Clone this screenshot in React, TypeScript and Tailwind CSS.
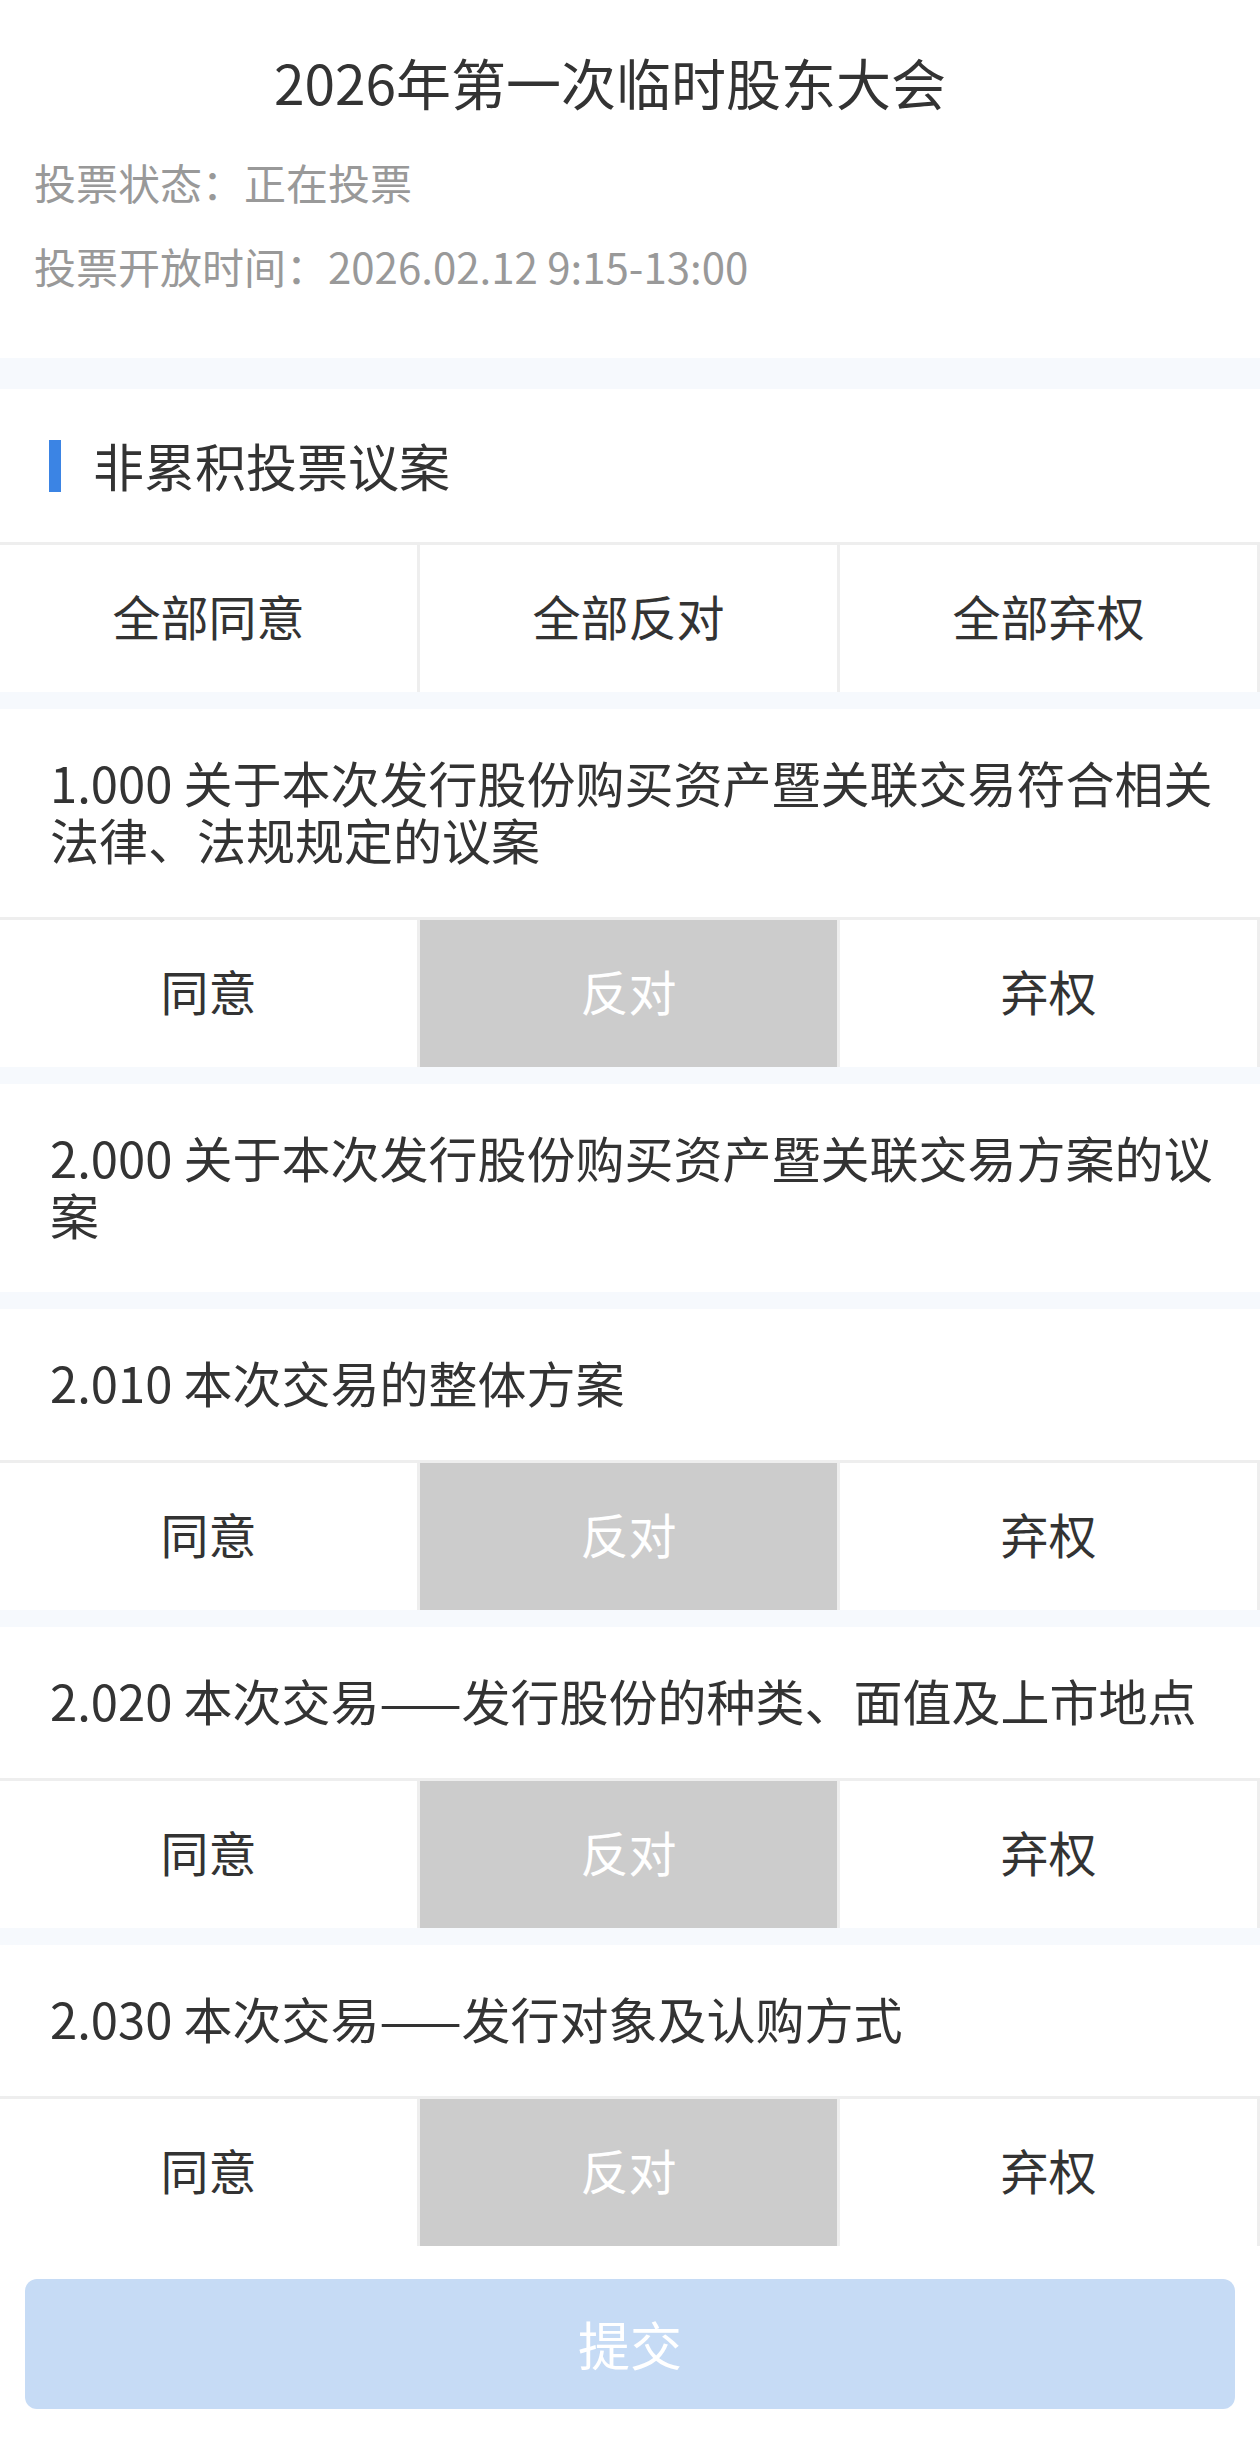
const FONT = { fontFamily: '"Noto Sans CJK SC", "Noto Sans", sans-serif' };

type Choice = 'agree' | 'oppose' | 'abstain';

type Motion = {
  id: string;
  title: string;
  votable: boolean;
};

const motions: Motion[] = [
  { id: '1.000', title: '关于本次发行股份购买资产暨关联交易符合相关法律、法规规定的议案', votable: true },
  { id: '2.000', title: '关于本次发行股份购买资产暨关联交易方案的议案', votable: false },
  { id: '2.010', title: '本次交易的整体方案', votable: true },
  { id: '2.020', title: '本次交易——发行股份的种类、面值及上市地点', votable: true },
  { id: '2.030', title: '本次交易——发行对象及认购方式', votable: true },
];

const Band = () => <div className="h-[17px] bg-[#f6f9fd]" />;

const VoteRow = ({ labels, selected }: { labels: string[]; selected?: number }) => (
  <div className="grid grid-cols-3 border-t-[3px] border-[#eeeeee] bg-white">
    {labels.map((label, i) => (
      <button
        key={label}
        type="button"
        className={
          i === selected
            ? 'flex h-[147px] items-center justify-center border-r-[3px] border-[#eeeeee] bg-[#cccccc] pb-[8px] text-[48px] text-white'
            : 'flex h-[147px] items-center justify-center border-r-[3px] border-[#eeeeee] bg-white pb-[8px] text-[48px] text-[#333333]'
        }
      >
        {label}
      </button>
    ))}
  </div>
);

export default function App() {
  const choice: Choice = 'oppose';

  return (
    <div className="min-h-[2441px] w-[1260px] bg-white" style={FONT}>
      {/* meeting header */}
      <div className="px-[34px] pb-[50px] pt-[41px]">
        <h1 className="pr-[40px] text-center text-[55px] leading-[80px] font-normal text-[#333333]">
          2026年第一次临时股东大会
        </h1>
        <div className="mt-[19px] text-[42px] leading-[84px] text-[#999999]">
          <p>投票状态：正在投票</p>
          <p>投票开放时间：2026.02.12 9:15-13:00</p>
        </div>
      </div>

      <div className="h-[31px] bg-[#f6f9fd]" />

      <div className="flex h-[153px] items-center gap-[32px] pl-[49px]">
        <span className="h-[52px] w-[12px] bg-[#3b84e4]" />
        <span className="text-[51px] text-[#333333]">非累积投票议案</span>
      </div>
      <VoteRow labels={['全部同意', '全部反对', '全部弃权']} />

      {motions.map((m) => (
        <div key={m.id}>
          <Band />
          <div className="pb-[50px] pl-[50px] pr-[40px] pt-[44px] text-[49px] leading-[57px] text-[#333333]">
            {m.id} {m.title}
          </div>
          {m.votable && (
            <VoteRow labels={['同意', '反对', '弃权']} selected={choice === 'oppose' ? 1 : undefined} />
          )}
        </div>
      ))}

      <div className="px-[25px] pb-[32px] pt-[33px]">
        <button
          type="button"
          className="flex h-[130px] w-full items-center justify-center rounded-[12px] bg-[#c6dbf5] text-[52px] text-white"
        >
          提交
        </button>
      </div>
    </div>
  );
}
